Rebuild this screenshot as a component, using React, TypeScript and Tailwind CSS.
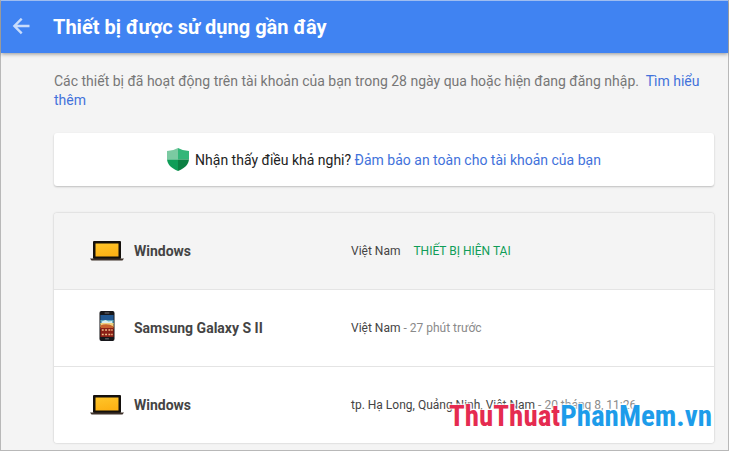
import { clsx } from 'clsx'

type Device = {
  id: number
  name: string
  icon: 'laptop' | 'phone'
  place: string
  lastUsed?: string
  current?: boolean
}

const devices: Device[] = [
  { id: 1, name: 'Windows', icon: 'laptop', place: 'Việt Nam', current: true },
  {
    id: 2,
    name: 'Samsung Galaxy S II',
    icon: 'phone',
    place: 'Việt Nam',
    lastUsed: '27 phút trước',
  },
  {
    id: 3,
    name: 'Windows',
    icon: 'laptop',
    place: 'tp. Hạ Long, Quảng Ninh, Việt Nam',
    lastUsed: '20 tháng 8, 11:26',
  },
]

const BackIcon = () => (
  <svg
    width="18"
    height="18"
    viewBox="0 0 18 18"
    fill="none"
    stroke="currentColor"
    strokeWidth="2.4"
    aria-hidden="true"
  >
    <path d="M17.500 8H3M9.700 0.700 2.400 8l7.300 7.300" />
  </svg>
)

const ShieldIcon = () => (
  <svg width="22" height="24" viewBox="0 0 22 24" aria-hidden="true">
    <path d="M11 0Q6 3 0 3v8.500h11z" fill="#7bcaa2" />
    <path d="M11 0q5 3 11 3v8.500H11z" fill="#33b679" />
    <path d="M0 11.500h11V23C4.500 20.500 0.500 16.500 0 11.500z" fill="#0f9d58" />
    <path d="M22 11.500H11V23c6.500-2.500 10.500-6.500 11-11.500z" fill="#0b8043" />
  </svg>
)

const LaptopIcon = () => (
  <svg width="34" height="20" viewBox="0 0 34 20" aria-hidden="true">
    <defs>
      <linearGradient id="screen" x1="0" y1="0" x2="0.3" y2="1">
        <stop offset="0" stopColor="#ffc52a" />
        <stop offset="1" stopColor="#fdb215" />
      </linearGradient>
    </defs>
    <rect x="3" y="0" width="28" height="18" rx="1" fill="#14100c" />
    <rect x="5.500" y="2.500" width="23" height="13" fill="url(#screen)" />
    <path d="M0 17.500h34l-1.500 2h-31z" fill="#3d3029" />
  </svg>
)

const PhoneIcon = () => (
  <svg
    width="16"
    height="30"
    viewBox="0 0 17 30"
    preserveAspectRatio="none"
    className="mb-1"
    aria-hidden="true"
  >
    <rect x="0.500" y="0" width="16" height="30" rx="2" fill="#17171b" />
    <rect x="6" y="1.500" width="5" height="1" fill="#77777c" />
    <rect x="1.500" y="4" width="14" height="6" fill="#21568f" />
    <rect x="1.500" y="9" width="14" height="4" fill="#5fa6bd" />
    <path d="M3 10.500 7 9l3 1.500 4-.5v2H3z" fill="#d8eef2" />
    <rect x="1.500" y="12" width="14" height="4" fill="#efcf7c" />
    <path d="M1.500 14.500q7-3 14 1V18h-14z" fill="#c9632f" />
    <rect x="1.500" y="17" width="14" height="9" fill="#8b1f16" />
    <path
      d="M3 19h2M6.500 19h2M10 19h2M13 19h1.500M3 23.500h2M6.500 23.500h2M10 23.500h2M13 23.500h1.500"
      stroke="#f0c08a"
      strokeWidth="1.500"
    />
    <rect x="6.500" y="27" width="4" height="1.500" fill="#55555a" />
  </svg>
)

const Header = () => (
  <header className="relative flex h-[53px] items-center border-t border-[#9fbdf0] bg-[#4083f2] pl-[11px] text-white shadow-[0_1px_4px_rgba(0,0,0,0.4)]">
    <button type="button" aria-label="Quay lại" className="text-[#c9dcfb]">
      <BackIcon />
    </button>
    <h1 className="ml-[23px] text-xl font-bold">
      Thiết bị được sử dụng gần đây
    </h1>
  </header>
)

const DeviceRow = ({ device }: { device: Device }) => (
  <li
    className={clsx(
      'flex h-[77px] items-center border-b border-[#e4e4e4] pl-9 last:h-[76px] last:border-b-0',
      device.current ? 'bg-[#f4f4f4]' : 'bg-white',
    )}
  >
    <div className="flex w-[34px] justify-center">
      {device.icon === 'laptop' ? <LaptopIcon /> : <PhoneIcon />}
    </div>
    <h2 className="ml-2.5 w-[217px] text-sm font-bold text-[#444]">
      {device.name}
    </h2>
    <p className="text-xs whitespace-nowrap text-[#444]">
      {device.place}
      {device.current && (
        <span className="ml-[13px] text-[#0f9d58]">THIẾT BỊ HIỆN TẠI</span>
      )}
      {device.lastUsed && (
        <span className="text-[#8a8a8a]"> - {device.lastUsed}</span>
      )}
    </p>
  </li>
)

export default function App() {
  return (
    <div className="relative min-h-screen border-x border-b border-[#b8b8b8] bg-[#f4f4f4] font-['Roboto',sans-serif]">
      <Header />

      <main className="pt-[19px] pr-3.5 pb-[7px] pl-[53px]">
        <p className="text-sm leading-[19px] text-[#777]">
          Các thiết bị đã hoạt động trên tài khoản của bạn trong 28 ngày qua
          hoặc hiện đang đăng nhập.&nbsp;{' '}
          <a href="#" className="text-[#4272db]">
            Tìm hiểu thêm
          </a>
        </p>

        <section className="mt-[23px] flex h-[53px] items-center justify-center gap-x-1.5 rounded-[3px] bg-white text-sm text-[#222] shadow-[0_1px_2px_rgba(0,0,0,0.22)]">
          <ShieldIcon />
          <p>
            Nhận thấy điều khả nghi?{' '}
            <a href="#" className="text-[#4272db]">
              Đảm bảo an toàn cho tài khoản của bạn
            </a>
          </p>
        </section>

        <ul className="mt-[27px] overflow-hidden rounded-[3px] shadow-[0_0_2px_rgba(0,0,0,0.25)]">
          {devices.map((device) => (
            <DeviceRow key={device.id} device={device} />
          ))}
        </ul>
      </main>

      <p className="absolute right-4 bottom-4 font-['Roboto_Condensed','Roboto',sans-serif] text-[29px] leading-9 font-bold text-[#1d9cea] [text-shadow:0_0_2px_#fff,0_0_2px_#fff,0_0_3px_#fff,0_0_3px_#fff]">
        <span className="text-[#e52b50]">ThuThuat</span>PhanMem.vn
      </p>
    </div>
  )
}
